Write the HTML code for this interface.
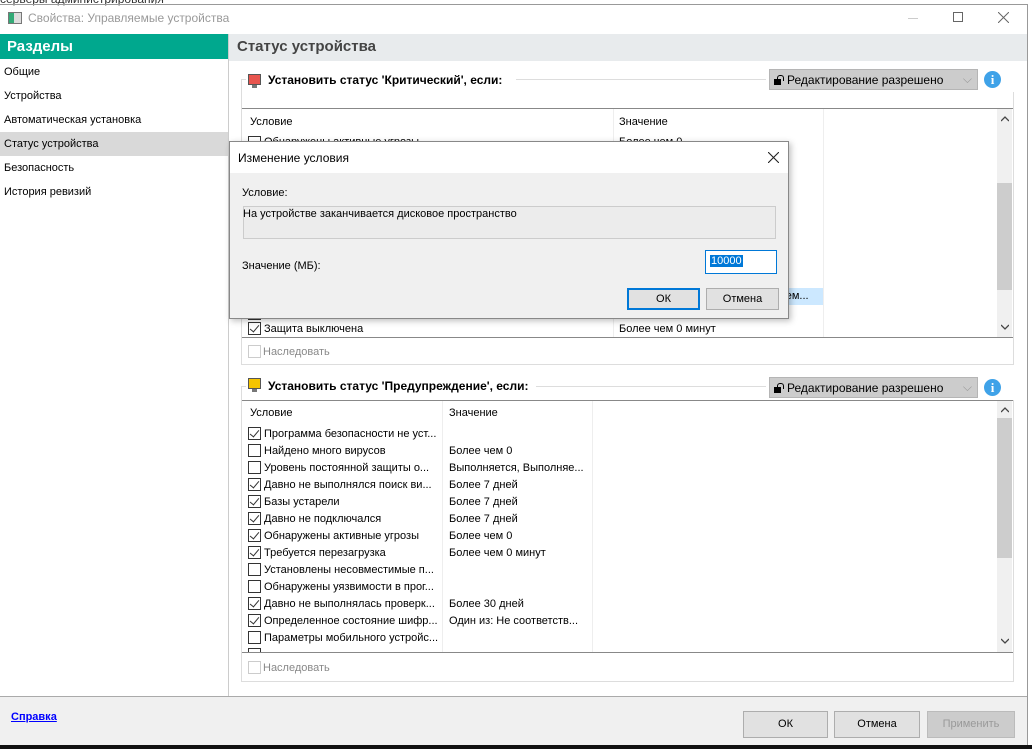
<!DOCTYPE html>
<html><head><meta charset="utf-8"><style>
*{margin:0;padding:0;box-sizing:border-box}
body{width:1032px;height:749px;position:relative;overflow:hidden;background:#fff;font-family:"Liberation Sans",sans-serif;font-size:11px;color:#000}
.a{position:absolute;white-space:nowrap}
.cb{position:absolute;width:13px;height:13px;border:1px solid #333;background:#fff}
.cb.c::after{content:"";position:absolute;left:3px;top:0px;width:4px;height:8px;border:solid #333;border-width:0 1.5px 1.5px 0;transform:rotate(40deg)}
.btn{position:absolute;background:#e1e1e1;border:1px solid #adadad;text-align:center;font-size:11px}
.dd{position:absolute;background:#ccc;border:1px solid #b5b5b5;height:21px;font-size:12px;padding:3px 0 0 17px}
.info{position:absolute;width:17px;height:17px;border-radius:50%;background:#3fa2e8;color:#fff;font-weight:bold;font-size:13px;text-align:center;line-height:17px;font-family:"Liberation Serif",serif}
.lock{position:absolute;left:4px;top:9px;width:7px;height:6px;background:#000}
.lock::before{content:"";position:absolute;left:3px;top:-4px;width:5px;height:5px;border:1.5px solid #000;border-bottom:none;border-radius:3px 3px 0 0}
</style></head><body>
<div class="a" style="left:0;top:-8px;font-size:12px;color:#333">серверы администрирования</div>
<div class="a" style="left:155px;top:0;width:1px;height:5px;background:#888"></div>
<div class="a" style="left:0;top:4px;width:1028px;height:1px;background:#999"></div>
<div class="a" style="left:1027px;top:4px;width:1px;height:745px;background:#999"></div>
<div class="a" style="left:1028px;top:0;width:4px;height:749px;background:#fff"></div>
<div class="a" style="left:8px;top:12px;width:14px;height:12px;border:1px solid #777;background:linear-gradient(90deg,#3a7 0 40%,#ddd 40%)"></div>
<div class="a" style="left:28px;top:11px;font-size:12px;color:#999">Свойства: Управляемые устройства</div>
<div class="a" style="left:908px;top:18px;width:10px;height:1px;background:#ccc"></div>
<div class="a" style="left:953px;top:12px;width:10px;height:10px;border:1px solid #666"></div>
<svg class="a" style="left:998px;top:12px" width="11" height="11"><path d="M0 0L11 11M11 0L0 11" stroke="#666" stroke-width="1"/></svg>
<div class="a" style="left:0;top:34px;width:228px;height:25px;background:#00a88e"></div>
<div class="a" style="left:7px;top:38px;font-size:15px;font-weight:bold;color:#fff">Разделы</div>
<div class="a" style="left:0;top:132px;width:228px;height:24px;background:#d9d9d9"></div>
<div class="a" style="left:4px;top:66px">Общие</div>
<div class="a" style="left:4px;top:90px">Устройства</div>
<div class="a" style="left:4px;top:114px">Автоматическая установка</div>
<div class="a" style="left:4px;top:138px">Статус устройства</div>
<div class="a" style="left:4px;top:162px">Безопасность</div>
<div class="a" style="left:4px;top:186px">История ревизий</div>
<div class="a" style="left:228px;top:34px;width:1px;height:662px;background:#ccc"></div>
<div class="a" style="left:229px;top:34px;width:798px;height:27px;background:#e8ebed"></div>
<div class="a" style="left:237px;top:38px;font-size:15px;font-weight:bold;color:#444">Статус устройства</div>
<!-- group 1 -->
<div class="a" style="left:241px;top:79px;width:773px;height:286px;border:1px solid #ddd"></div>
<div class="a" style="left:246px;top:72px;width:270px;height:16px;background:#fff"></div>
<div class="a" style="left:248px;top:74px;width:13px;height:11px;background:#e8554e;border:1px solid #555"></div>
<div class="a" style="left:252px;top:85px;width:5px;height:3px;background:#777"></div>
<div class="a" style="left:268px;top:73px;font-size:12px;font-weight:bold">Установить статус 'Критический', если:</div>
<div class="a" style="left:766px;top:68px;width:248px;height:24px;background:#fff"></div>
<div class="dd" style="left:769px;top:69px;width:209px">Редактирование разрешено<div class="lock"></div><span style="position:absolute;right:5px;top:2px;color:#999">⌵</span></div>
<div class="info" style="left:984px;top:71px">i</div>
<div class="a" style="left:242px;top:108px;width:771px;height:230px;border-top:1px solid #888;border-bottom:1px solid #888"></div>
<div class="a" style="left:613px;top:109px;width:1px;height:228px;background:#eee"></div>
<div class="a" style="left:823px;top:109px;width:1px;height:228px;background:#eee"></div>
<div class="a" style="left:250px;top:116px">Условие</div>
<div class="a" style="left:619px;top:116px">Значение</div>
<div class="cb" style="left:248px;top:136px"></div>
<div class="a" style="left:264px;top:136px">Обнаружены активные угрозы</div>
<div class="a" style="left:619px;top:136px">Более чем 0</div>
<div class="a" style="left:590px;top:288px;width:233px;height:17px;background:#cce8ff"></div>
<div class="a" style="left:780px;top:290px">чем...</div>
<div class="cb" style="left:248px;top:307px"></div>
<div class="cb c" style="left:248px;top:322px"></div>
<div class="a" style="left:264px;top:323px">Защита выключена</div>
<div class="a" style="left:619px;top:323px">Более чем 0 минут</div>
<div class="a" style="left:997px;top:109px;width:15px;height:228px;background:#f0f0f0"></div>
<div class="a" style="left:997px;top:183px;width:15px;height:107px;background:#cdcdcd"></div>
<svg class="a" style="left:1001px;top:116px" width="8" height="6"><path d="M0 5L4 1L8 5" stroke="#444" fill="none" stroke-width="1.3"/></svg>
<svg class="a" style="left:1001px;top:324px" width="8" height="6"><path d="M0 1L4 5L8 1" stroke="#444" fill="none" stroke-width="1.3"/></svg>
<div class="cb" style="left:248px;top:345px;border-color:#ccc"></div>
<div class="a" style="left:263px;top:346px;color:#888">Наследовать</div>
<!-- group 2 -->
<div class="a" style="left:241px;top:386px;width:773px;height:296px;border:1px solid #ddd"></div>
<div class="a" style="left:246px;top:378px;width:290px;height:16px;background:#fff"></div>
<div class="a" style="left:248px;top:378px;width:13px;height:11px;background:#f5c400;border:1px solid #555"></div>
<div class="a" style="left:252px;top:389px;width:5px;height:3px;background:#777"></div>
<div class="a" style="left:268px;top:379px;font-size:12px;font-weight:bold">Установить статус 'Предупреждение', если:</div>
<div class="a" style="left:766px;top:376px;width:248px;height:24px;background:#fff"></div>
<div class="dd" style="left:769px;top:377px;width:209px">Редактирование разрешено<div class="lock"></div><span style="position:absolute;right:5px;top:2px;color:#999">⌵</span></div>
<div class="info" style="left:984px;top:379px">i</div>
<div class="a" style="left:242px;top:400px;width:771px;height:253px;border-top:1px solid #888;border-bottom:1px solid #888"></div>
<div class="a" style="left:442px;top:401px;width:1px;height:251px;background:#eee"></div>
<div class="a" style="left:592px;top:401px;width:1px;height:251px;background:#eee"></div>
<div class="a" style="left:250px;top:407px">Условие</div>
<div class="a" style="left:449px;top:407px">Значение</div>
<div class="a" style="left:997px;top:401px;width:15px;height:251px;background:#f0f0f0"></div>
<div class="a" style="left:997px;top:418px;width:15px;height:140px;background:#cdcdcd"></div>
<svg class="a" style="left:1001px;top:407px" width="8" height="6"><path d="M0 5L4 1L8 5" stroke="#444" fill="none" stroke-width="1.3"/></svg>
<svg class="a" style="left:1001px;top:638px" width="8" height="6"><path d="M0 1L4 5L8 1" stroke="#444" fill="none" stroke-width="1.3"/></svg>
<div id="rows"></div>
<div class="cb" style="left:248px;top:661px;border-color:#ccc"></div>
<div class="a" style="left:263px;top:662px;color:#888">Наследовать</div>
<!-- bottom -->
<div class="a" style="left:0;top:696px;width:1027px;height:1px;background:#aaa"></div>
<div class="a" style="left:0;top:697px;width:1027px;height:48px;background:#f0f0f0"></div>
<div class="a" style="left:11px;top:711px;font-weight:bold;color:#00f;text-decoration:underline">Справка</div>
<div class="btn" style="left:743px;top:711px;width:85px;height:27px;line-height:25px">ОК</div>
<div class="btn" style="left:834px;top:711px;width:86px;height:27px;line-height:25px">Отмена</div>
<div class="btn" style="left:927px;top:711px;width:88px;height:27px;line-height:25px;color:#999;background:#ccc;border-color:#bbb">Применить</div>
<div class="a" style="left:0;top:745px;width:1032px;height:4px;background:#111"></div>
<!-- dialog -->
<div class="a" style="left:229px;top:141px;width:560px;height:178px;border:1px solid #888;background:#f0f0f0;box-shadow:2px 2px 6px rgba(0,0,0,.25)">
 <div class="a" style="left:0;top:0;width:558px;height:31px;background:#fff"></div>
 <div class="a" style="left:8px;top:9px;font-size:12px">Изменение условия</div>
 <svg class="a" style="left:538px;top:10px" width="11" height="11"><path d="M0 0L11 11M11 0L0 11" stroke="#222" stroke-width="1.1"/></svg>
 <div class="a" style="left:12px;top:45px">Условие:</div>
 <div class="a" style="left:13px;top:64px;width:533px;height:33px;background:#ececec;border:1px solid #ccc"></div>
 <div class="a" style="left:13px;top:66px">На устройстве заканчивается дисковое пространство</div>
 <div class="a" style="left:12px;top:118px">Значение (МБ):</div>
 <div class="a" style="left:475px;top:108px;width:72px;height:24px;border:1px solid #0078d7;background:#fff"></div>
 <div class="a" style="left:480px;top:113px;background:#0078d7;color:#fff;padding:0 1px">10000</div>
 <div class="btn" style="left:397px;top:146px;width:73px;height:22px;border:2px solid #0078d7;line-height:18px">ОК</div>
 <div class="btn" style="left:476px;top:146px;width:73px;height:22px;line-height:20px">Отмена</div>
</div>
<script>
var r=[[1,"Программа безопасности не уст...",""],[0,"Найдено много вирусов","Более чем 0"],[0,"Уровень постоянной защиты о...","Выполняется, Выполняе..."],[1,"Давно не выполнялся поиск ви...","Более 7 дней"],[1,"Базы устарели","Более 7 дней"],[1,"Давно не подключался","Более 7 дней"],[1,"Обнаружены активные угрозы","Более чем 0"],[1,"Требуется перезагрузка","Более чем 0 минут"],[0,"Установлены несовместимые п...",""],[0,"Обнаружены уязвимости в прог...",""],[1,"Давно не выполнялась проверк...","Более 30 дней"],[1,"Определенное состояние шифр...","Один из: Не соответств..."],[0,"Параметры мобильного устройс...",""]];
var h="";r.forEach(function(x,i){var y=427+i*17;h+='<div class="cb'+(x[0]?' c':'')+'" style="left:248px;top:'+y+'px"></div><div class="a" style="left:264px;top:'+(y+1)+'px">'+x[1]+'</div><div class="a" style="left:449px;top:'+(y+1)+'px">'+x[2]+'</div>';});
h+='<div class="a" style="left:248px;top:648px;width:13px;height:4px;border:1px solid #333;border-bottom:none"></div>';
document.getElementById("rows").innerHTML=h;
</script>
</body></html>
